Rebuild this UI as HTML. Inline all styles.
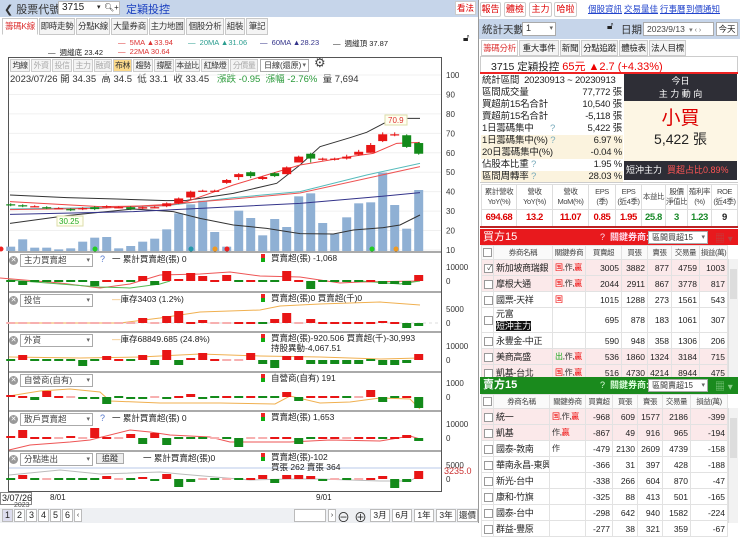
<!DOCTYPE html>
<html><head><meta charset="utf-8">
<style>
*{margin:0;padding:0;box-sizing:border-box}
body{width:740px;height:523px;overflow:hidden;background:#fff;font-family:"Liberation Sans","Noto Sans CJK TC",sans-serif;font-size:10px;color:#222;position:relative}
.a{position:absolute;white-space:nowrap}
.tab{position:absolute;top:18px;height:17px;border:1px solid #c8c8c8;background:#f4f4f4;font-size:8.5px;line-height:15px;text-align:center;color:#333;white-space:nowrap;overflow:hidden;letter-spacing:-0.3px}
.tb{position:absolute;top:59px;height:13px;border:1px solid #ccc;background:#f4f4f4;font-size:8px;line-height:11px;text-align:center;color:#333;white-space:nowrap;overflow:hidden;letter-spacing:-0.5px}
.tb.d{color:#aaa}
.sel{position:absolute;height:13px;border:1px solid #aaa;background:#fff;font-size:8.5px;line-height:11px;padding-left:3px;color:#333;white-space:nowrap;overflow:hidden}
.sel:after{content:"▾";position:absolute;right:2px;top:0;font-size:7px;color:#666}
.xi{position:absolute;width:9px;height:9px;border-radius:50%;background:#999;color:#fff;font-size:7px;line-height:9px;text-align:center}
.rb{position:absolute;top:2px;height:15px;border:1px solid #ccc;border-radius:2px;background:#fff;color:#d00;font-size:9px;line-height:13px;text-align:center;white-space:nowrap}
.rt{position:absolute;top:40px;height:16px;border:1px solid #ccc;background:#f4f4f4;font-size:8.5px;line-height:14px;text-align:center;white-space:nowrap;overflow:hidden;letter-spacing:-0.3px}
table{border-collapse:collapse;table-layout:fixed}
td,th{white-space:nowrap;overflow:hidden}
.st td{height:12px;font-size:9.5px;line-height:12px;padding:0 1px;letter-spacing:-0.2px}
.ft td{border:1px solid #ddd;text-align:center;font-size:7.5px;line-height:10px;color:#444;letter-spacing:-0.4px}
.bt td{border:1px solid #e2e2e2;font-size:8.5px;text-align:right;padding:0 2px;height:16px}
.bt td.n{text-align:left;font-size:9px;letter-spacing:-0.3px}
.bt td.k{text-align:left;font-size:8px;color:#333;letter-spacing:-0.3px}
.bt th{border:1px solid #e2e2e2;font-size:7.5px;font-weight:normal;color:#444;height:14px;background:#fafafa;letter-spacing:-0.4px}
.pk{background:#fbe9ea}
.cb{display:inline-block;width:9px;height:9px;border:1px solid #999;background:#fff;vertical-align:middle}
.r{color:#e00}
</style></head><body>
<div class="a" style="left:0;top:0;width:478px;height:17px;background:#c6d5ea"></div>
<div class="a" style="left:4px;top:1px;font-size:11px;color:#333">❮ 股票代號</div>
<div class="a" style="left:58px;top:1px;width:62px;height:14px;background:#fff;border:1px solid #bbb;font-size:10px;line-height:12px;padding-left:3px">3715<span style="position:absolute;left:38px;font-size:7px">▾</span><span style="position:absolute;left:45px;top:0;font-size:8px">🔍︎+</span></div>
<div class="a" style="left:126px;top:1px;font-size:11px;color:#1a3fc0">定穎投控</div>
<div class="a" style="left:455px;top:1px;width:21px;height:14px;background:#fff;border:1px solid #ccc;color:#d00;font-size:8.5px;line-height:12px;text-align:center">看法</div>
<div class="tab" style="left:2px;width:36px;background:#fff;color:#d33;border-bottom-color:#fff">籌碼K線</div>
<div class="tab" style="left:39px;width:36px">即時走勢</div>
<div class="tab" style="left:76px;width:34px">分點K線</div>
<div class="tab" style="left:111px;width:37px">大量券商</div>
<div class="tab" style="left:149px;width:36px">主力地圖</div>
<div class="tab" style="left:186px;width:38px">個股分析</div>
<div class="tab" style="left:225px;width:20px">組裝</div>
<div class="tab" style="left:246px;width:22px">筆記</div>
<div class="a" style="left:118px;top:38px;font-size:7.5px;color:#d33">— &nbsp;5MA ▲33.94</div>
<div class="a" style="left:188px;top:38px;font-size:7.5px;color:#2a9d8f">— &nbsp;20MA ▲31.06</div>
<div class="a" style="left:260px;top:38px;font-size:7.5px;color:#33338a">— &nbsp;60MA ▲28.23</div>
<div class="a" style="left:333px;top:38px;font-size:7.5px;color:#222">— &nbsp;週縫頂 37.87</div>
<div class="a" style="left:48px;top:47px;font-size:7.5px;color:#222">— &nbsp;週縫底 23.42</div>
<div class="a" style="left:118px;top:47px;font-size:7.5px;color:#d33">— &nbsp;22MA 30.64</div>
<div class="a" style="left:463px;top:33px;font-size:10px">🔓︎</div>
<div class="a" style="left:8px;top:57px;width:434px;height:435px;border:1px solid #555"></div>
<div class="tb" style="left:10px;width:20px">均線</div>
<div class="tb d" style="left:31px;width:20px">外資</div>
<div class="tb d" style="left:52px;width:20px">投信</div>
<div class="tb d" style="left:73px;width:20px">主力</div>
<div class="tb d" style="left:94px;width:18px">融資</div>
<div class="tb" style="left:113px;width:19px;background:#fbd98a">布林</div>
<div class="tb" style="left:133px;width:20px">趨勢</div>
<div class="tb" style="left:154px;width:20px">撐壓</div>
<div class="tb" style="left:175px;width:25px">本益比</div>
<div class="tb" style="left:201px;width:28px">紅綠燈</div>
<div class="tb d" style="left:230px;width:28px">分價量</div>
<div class="sel" style="left:260px;top:59px;width:49px;font-size:8px">日線(還原)</div>
<div class="a" style="left:314px;top:55px;font-size:13px;color:#444">⚙</div>
<div class="a" style="left:10px;top:71px;font-size:9.5px;color:#333">2023/07/26 開 34.35 &nbsp;高 34.5 &nbsp;低 33.1 &nbsp;收 33.45 &nbsp;&nbsp;<span style="color:#2a9a3a">漲跌 -0.95 &nbsp;漲幅 -2.76%</span> &nbsp;量 7,694</div>
<svg id="ch" class="a" style="left:0;top:0" width="480" height="523"></svg>
<div id="subs"></div>
<div class="a" style="left:0;top:492px;width:32px;height:13px;border:1px solid #888;background:#fff;font-size:9px;line-height:11px;padding-left:1px">3/07/26</div>
<div class="a" style="left:14px;top:502px;font-size:7px;color:#555">2023</div>
<div class="a" style="left:50px;top:493px;font-size:8px">8/01</div>
<div class="a" style="left:316px;top:493px;font-size:8px">9/01</div>
<div class="a" style="left:0;top:508px;width:478px;height:15px;background:#eef0f3"></div>
<div id="pg"></div>
<div class="a" style="left:294px;top:509px;width:32px;height:13px;border:1px solid #bbb;background:#fff"></div>
<div class="a" style="left:328px;top:509px;width:8px;height:13px;border:1px solid #bbb;background:#fff;font-size:7px;text-align:center;line-height:11px">›</div>
<div class="a" style="left:337px;top:507px;font-size:13px;color:#333">⊖</div>
<div class="a" style="left:354px;top:507px;font-size:13px;color:#333">⊕</div>
<div class="a" style="left:370px;top:509px;width:20px;height:13px;border:1px solid #bbb;background:#fff;font-size:8.5px;line-height:11px;text-align:center">3月</div>
<div class="a" style="left:392px;top:509px;width:20px;height:13px;border:1px solid #bbb;background:#fff;font-size:8.5px;line-height:11px;text-align:center">6月</div>
<div class="a" style="left:414px;top:509px;width:20px;height:13px;border:1px solid #bbb;background:#fff;font-size:8.5px;line-height:11px;text-align:center">1年</div>
<div class="a" style="left:436px;top:509px;width:20px;height:13px;border:1px solid #bbb;background:#fff;font-size:8.5px;line-height:11px;text-align:center">3年</div>
<div class="a" style="left:457px;top:509px;width:21px;height:13px;border:1px solid #bbb;background:#fff;font-size:8.5px;line-height:11px;text-align:center">還價</div>

<div class="a" style="left:478px;top:0;width:1px;height:523px;background:#999"></div>
<div class="rb" style="left:480px;width:21px">報告</div>
<div class="rb" style="left:504px;width:22px">體檢</div>
<div class="rb" style="left:529px;width:23px">主力</div>
<div class="rb" style="left:554px;width:23px">哈啦</div>
<div class="a" style="left:588px;top:3px;font-size:8.5px;color:#2244cc;text-decoration:underline">個股資訊</div>
<div class="a" style="left:624px;top:3px;font-size:8.5px;color:#2244cc;text-decoration:underline">交易量佳</div>
<div class="a" style="left:660px;top:3px;font-size:8.5px;color:#2244cc;text-decoration:underline">行事曆</div>
<div class="a" style="left:686px;top:3px;font-size:8.5px;color:#2244cc;text-decoration:underline">到價通知</div>
<div class="a" style="left:479px;top:19px;width:261px;height:20px;background:#c6d5ea"></div>
<div class="a" style="left:482px;top:22px;font-size:10.5px;color:#333">統計天數</div>
<div class="sel" style="left:522px;top:22px;width:34px;height:14px;font-size:9px">1</div>
<div class="a" style="left:607px;top:21px;font-size:10px">🔓︎</div>
<div class="a" style="left:621px;top:22px;font-size:10.5px;color:#333">日期</div>
<div class="a" style="left:643px;top:22px;width:71px;height:14px;border:1px solid #aaa;background:#fff;font-size:8.5px;line-height:12px;padding-left:3px;color:#444">2023/9/13 <span style="font-size:7px;color:#777">&nbsp;▾ ‹ ›</span></div>
<div class="a" style="left:716px;top:22px;width:22px;height:14px;border:1px solid #aaa;background:#fff;font-size:8.5px;line-height:12px;text-align:center">今天</div>
<div class="rt" style="left:481px;width:37px;background:#fff;color:#d33">籌碼分析</div>
<div class="rt" style="left:519px;width:40px">重大事件</div>
<div class="rt" style="left:560px;width:20px">新聞</div>
<div class="rt" style="left:581px;width:37px">分點追蹤</div>
<div class="rt" style="left:619px;width:29px">體檢表</div>
<div class="rt" style="left:649px;width:37px">法人目標</div>
<div class="a" style="left:480px;top:56px;width:258px;height:17px;border:1px solid #ccc;border-bottom:none"></div>
<div class="a" style="left:491px;top:58px;font-size:10.5px;color:#222">3715 定穎投控 <span class="r" style="font-size:11px">65元 ▲2.7 (+4.33%)</span></div>
<div class="a" style="left:480px;top:72px;width:258px;height:2px;background:#e22"></div>
<table class="st a" style="left:481px;top:75px;width:142px">
<col style="width:90px"><col>
<tr><td colspan=2>統計區間 &nbsp;20230913 ~ 20230913</td></tr>
<tr><td>區間成交量</td><td align=right>77,772 張</td></tr>
<tr><td>買超前15名合計</td><td align=right>10,540 張</td></tr>
<tr><td>賣超前15名合計</td><td align=right>-5,118 張</td></tr>
<tr><td>1日籌碼集中 <span style="color:#7ab;margin-left:14px">?</span></td><td align=right>5,422 張</td></tr>
<tr style="background:#fbf3de"><td>1日籌碼集中(%) <span style="color:#7ab">?</span></td><td align=right>6.97 %</td></tr>
<tr style="background:#fbf3de"><td>20日籌碼集中(%)</td><td align=right>-0.04 %</td></tr>
<tr><td>佔股本比重 <span style="color:#7ab">?</span></td><td align=right>1.95 %</td></tr>
<tr style="background:#fbf3de"><td>區間周轉率 <span style="color:#7ab">?</span></td><td align=right>28.03 %</td></tr>
</table>
<div class="a" style="left:624px;top:74px;width:113px;height:27px;background:#2e2e36;color:#fff;font-size:9px;text-align:center;line-height:13px;padding-top:1px">今日<br>主 力 動 向</div>
<div class="a" style="left:624px;top:101px;width:113px;height:60px;background:#fdf6e4;text-align:center"><div style="color:#d00;font-size:19px;line-height:22px;margin-top:7px">小買</div><div style="font-size:14px;line-height:18px">5,422 張</div></div>
<div class="a" style="left:624px;top:161px;width:113px;height:19px;background:#2e2e36;color:#fff;font-size:9px;line-height:19px;padding-left:2px">短沖主力 &nbsp;<span style="color:#f55">買超占比0.89%</span></div>
<div class="a" style="left:480px;top:182px;width:258px;height:1px;background:#ccc"></div>
<table class="ft a" style="left:481px;top:184px;width:257px">
<col style="width:35px"><col style="width:36px"><col style="width:36px"><col style="width:27px"><col style="width:26px"><col style="width:24px"><col style="width:22px"><col style="width:24px"><col>
<tr style="height:25px"><td>累計營收<br>YoY(%)</td><td>營收<br>YoY(%)</td><td>營收<br>MoM(%)</td><td>EPS<br>(季)</td><td>EPS<br>(近4季)</td><td>本益比</td><td>股價<br>淨值比</td><td>殖利率<br>(%)</td><td>ROE<br>(近4季)</td></tr>
<tr style="height:17px;font-weight:bold"><td style="color:#d00;font-size:9.5px">694.68</td><td style="color:#d00;font-size:9.5px">13.2</td><td style="color:#d00;font-size:9.5px">11.07</td><td style="color:#d00;font-size:9.5px">0.85</td><td style="color:#d00;font-size:9.5px">1.95</td><td style="color:#1a8a2a;font-size:9.5px">25.8</td><td style="color:#1a8a2a;font-size:9.5px">3</td><td style="color:#1a8a2a;font-size:9.5px">1.23</td><td style="color:#222;font-size:9.5px">9</td></tr>
</table>
<div class="a" style="left:480px;top:226px;width:258px;height:2px;background:#b22"></div>
<div class="a" style="left:480px;top:229px;width:258px;height:16px;background:#e8191d;color:#fff;font-size:11px;line-height:16px;padding-left:3px">買方15<span style="position:absolute;left:120px;font-size:9px;color:#fde">? &nbsp;<b>關鍵券商:</b></span></div>
<div class="sel" style="left:648px;top:231px;width:60px;font-size:8px">區間買超15</div>
<div class="a" style="left:715px;top:230px;font-size:10px;color:#b44">▦ ▾</div>
<table class="bt a" style="left:481px;top:245px;width:247px">
<col style="width:12px"><col style="width:59px"><col style="width:33px"><col style="width:36px"><col style="width:26px"><col style="width:24px"><col style="width:28px"><col>
<tr><th><span class="cb"></span></th><th>券商名稱</th><th>關鍵券商</th><th>買賣超</th><th>買張</th><th>賣張</th><th>交易量</th><th>損益(萬)</th></tr>
<tr class="pk"><td><span class="cb" style="font-size:7px;line-height:7px">✓</span></td><td class="n">新加坡商瑞銀</td><td class="k"><span class="r">国</span>,作,<span class="r">贏</span></td><td>3005</td><td>3882</td><td>877</td><td>4759</td><td>1003</td></tr>
<tr class="pk"><td><span class="cb"></span></td><td class="n">摩根大通</td><td class="k"><span class="r">国</span>,作,<span class="r">贏</span></td><td>2044</td><td>2911</td><td>867</td><td>3778</td><td>817</td></tr>
<tr><td><span class="cb"></span></td><td class="n">國票-天祥</td><td class="k"><span class="r">国</span></td><td>1015</td><td>1288</td><td>273</td><td>1561</td><td>543</td></tr>
<tr style="height:25px"><td><span class="cb"></span></td><td class="n" style="line-height:12px">元富<br><span style="background:#111;color:#fff">短沖主力</span></td><td></td><td>695</td><td>878</td><td>183</td><td>1061</td><td>307</td></tr>
<tr><td><span class="cb"></span></td><td class="n">永豐金-中正</td><td></td><td>590</td><td>948</td><td>358</td><td>1306</td><td>206</td></tr>
<tr class="pk"><td><span class="cb"></span></td><td class="n">美商高盛</td><td class="k"><span style="color:#2a2">出</span>,作,<span class="r">贏</span></td><td>536</td><td>1860</td><td>1324</td><td>3184</td><td>715</td></tr>
<tr class="pk"><td><span class="cb"></span></td><td class="n">凱基-台北</td><td class="k"><span class="r">国</span>,作,<span class="r">贏</span></td><td>516</td><td>4730</td><td>4214</td><td>8944</td><td>475</td></tr>
</table>
<div class="a" style="left:728px;top:259px;width:10px;height:118px;background:#f2f2f2;border-left:1px solid #ddd"><div style="margin:10px 1px;height:30px;background:#ddd"></div></div>
<div class="a" style="left:480px;top:377px;width:258px;height:17px;background:#1a8a1d;color:#fff;font-size:11px;line-height:17px;padding-left:3px"><b>賣方15</b><span style="position:absolute;left:120px;font-size:9px;color:#dfd">? &nbsp;<b>關鍵券商:</b></span></div>
<div class="sel" style="left:648px;top:379px;width:60px;font-size:8px">區間賣超15</div>
<div class="a" style="left:715px;top:378px;font-size:10px;color:#8c8">▦ ▾</div>
<table class="bt a" style="left:481px;top:394px;width:247px">
<col style="width:12px"><col style="width:56px"><col style="width:36px"><col style="width:27px"><col style="width:25px"><col style="width:25px"><col style="width:28px"><col>
<tr><th><span class="cb"></span></th><th>券商名稱</th><th>關鍵券商</th><th>買賣超</th><th>買張</th><th>賣張</th><th>交易量</th><th>損益(萬)</th></tr>
<tr class="pk"><td><span class="cb"></span></td><td class="n">統一</td><td class="k"><span class="r">国</span>,作,<span class="r">贏</span></td><td>-968</td><td>609</td><td>1577</td><td>2186</td><td>-399</td></tr>
<tr class="pk"><td><span class="cb"></span></td><td class="n">凱基</td><td class="k">作,<span class="r">贏</span></td><td>-867</td><td>49</td><td>916</td><td>965</td><td>-194</td></tr>
<tr><td><span class="cb"></span></td><td class="n">國泰-敦南</td><td class="k">作</td><td>-479</td><td>2130</td><td>2609</td><td>4739</td><td>-158</td></tr>
<tr><td><span class="cb"></span></td><td class="n">華南永昌-東興</td><td></td><td>-366</td><td>31</td><td>397</td><td>428</td><td>-188</td></tr>
<tr><td><span class="cb"></span></td><td class="n">新光-台中</td><td></td><td>-338</td><td>266</td><td>604</td><td>870</td><td>-47</td></tr>
<tr><td><span class="cb"></span></td><td class="n">康和-竹旗</td><td></td><td>-325</td><td>88</td><td>413</td><td>501</td><td>-165</td></tr>
<tr><td><span class="cb"></span></td><td class="n">國泰-台中</td><td></td><td>-298</td><td>642</td><td>940</td><td>1582</td><td>-224</td></tr>
<tr><td><span class="cb"></span></td><td class="n">群益-豐原</td><td></td><td>-277</td><td>38</td><td>321</td><td>359</td><td>-67</td></tr>
</table>
<div class="a" style="left:728px;top:408px;width:10px;height:115px;background:#f2f2f2;border-left:1px solid #ddd"><div style="margin:10px 1px;height:40px;background:#ddd"></div></div>

<script>
var s='',X=function(i){return 10.7+12*i},P=function(p){return 75+(100-p)*1.944};
for(var v=10;v<=100;v+=10){s+='<line x1="9" x2="441" y1="'+P(v)+'" y2="'+P(v)+'" stroke="#f0f0f0"/>';s+='<text x="446" y="'+(P(v)+3)+'" font-size="8" fill="#333">'+v+'</text>';}
var vt=[575,553,578,578,583,580,560,548,546,580,573,560,551,523,475,448,437,531,575,467,489,541,492,516,424,415,504,536,487,445,442,353,450,521,405];
vt.forEach(function(t,i){var y=55+t/3;s+='<rect x="'+(X(i)-4.5)+'" y="'+y+'" width="9" height="'+(251-y)+'" fill="#8fb0d4"/>';});
function pl(pts,c,w){s+='<polyline fill="none" stroke="'+c+'" stroke-width="'+(w||1)+'" points="'+pts.map(function(p){return (p[0]/3)+','+(55+p[1]/3)}).join(' ')+'"/>';}
pl([[30,420],[200,428],[350,432],[500,437],[560,436],[700,415],[830,385],[900,330],[960,275],[1050,248],[1100,232],[1180,190],[1260,190]],'#333');
pl([[30,505],[200,482],[400,462],[520,470],[600,490],[700,510],[800,520],[900,536],[1000,537],[1060,525],[1150,518],[1200,510],[1260,480]],'#333');
pl([[30,462],[300,458],[500,452],[700,428],[900,410],[1100,360],[1260,325]],'#5bb',1);
pl([[30,464],[300,460],[500,448],[700,432],[900,414],[1100,370],[1260,335]],'#e55',1);
pl([[30,478],[400,470],[600,460],[900,445],[1100,428],[1260,413]],'#33338a',1);
pl([[30,440],[300,455],[500,452],[560,440],[700,390],[900,330],[1050,305],[1120,295],[1190,265],[1260,262]],'#e44',1);
var cd=[[33.5,33,34,32.5],[33,32.5,33.5,32],[32.5,32.5,33,32],[32,31.5,32.5,31],[31.5,31.5,32,31],[31,30.5,31.5,30],[31,31.5,32,30.5],[32,31,32.5,30.5],[32,32.5,33,31.5],[32,32,32.5,31.5],[32,31,32.5,30.5],[31.3,32,32.3,31],[32,32,32.5,31.5],[32.5,34,34.5,32],[34,36.5,37,33.5],[37,40,40.5,36],[40.5,40.5,41,40],[40.5,40.5,41,40],[44.5,46,46.5,44],[47.5,49,49.5,46],[50,48,50.5,47],[46.5,47.5,48,46],[49.5,48,50,47.5],[49,52.5,53,49],[55,58,58.5,55],[59.5,57,60,55],[57,57,57.5,56],[56.5,57,57.5,56],[57,58,59,56.5],[59,60.5,61.5,58.5],[60,64,65,60],[66,69.5,70.5,65.5],[69.5,69.5,70.5,68.5],[69,63,69.5,62.5],[65,59.5,65.5,59]];
cd.forEach(function(c,i){var up=c[1]>=c[0],col=up?'#e81515':'#138a1a',x=X(i);s+='<line x1="'+x+'" x2="'+x+'" y1="'+P(c[2])+'" y2="'+P(c[3])+'" stroke="'+col+'"/>';var t=P(Math.max(c[0],c[1])),b=P(Math.min(c[0],c[1]));s+='<rect x="'+(x-4.5)+'" y="'+t+'" width="9" height="'+Math.max(b-t,1.2)+'" fill="'+col+'"/>';});
s+='<rect x="57" y="216" width="26" height="10" fill="#fffff0" stroke="#dda"/><text x="59" y="224" font-size="8" fill="#2a2">30.25</text>';
s+='<rect x="385" y="115" width="22" height="10" fill="#fffff0" stroke="#dda"/><text x="388" y="123" font-size="8" fill="#d33">70.9</text>';
[[1,'#e22'],[95,'#2c2'],[191,'#29a'],[215,'#e92'],[227,'#e22'],[372,'#2c2'],[396,'#e92']].forEach(function(m){s+='<circle cx="'+m[0]+'" cy="249" r="2.5" fill="'+m[1]+'"/>';});
var pan=[[252,281,'10000'],[292,323,'5000'],[332,360,'10000'],[372,397,'1000'],[411,438,'10000'],[451,479,'5000']];
var dat=[[-1,-4,-1,-1,-1,-1,-1,-5,1,1,-1,5,-4,10,2,8,5,1,6,-1,1,-1,-1,10,1,-8,-1,-1,-1,-1,1,-3,-3,-4,6],
[0,0,0,0,0,0,0,0,0,0,0,5,0,7,12,1,3,0,0,1,1,-1,4,10,0,4,1,1,1,1,1,2,1,-5,-3],
[-1,5,-1,-1,-1,-1,-6,-1,4,1,-1,5,-5,10,-5,2,7,1,0,0,7,-4,-8,4,4,-4,-4,-4,-4,-4,-1,-5,-5,-3,6],
[2,1,-3,6,1,0,-2,-2,-7,-1,-2,-2,0,-2,1,3,-2,-1,1,-1,1,-1,-1,5,-4,1,1,1,-1,0,7,-5,-1,1,-11],
[2,8,1,1,0,2,0,10,1,0,4,-6,5,-7,-1,-1,-1,0,-1,-9,0,0,1,1,-6,-1,1,1,0,1,1,-1,1,3,-3],
[-1,4,-1,0,-1,-1,-1,-1,3,0,-1,2,-2,5,-8,-3,0,-1,0,-1,1,4,-4,4,4,3,-2,0,-1,0,1,3,-9,-3,8]];
var lines=[[[0,278],[60,283],[100,288],[130,284],[160,275],[200,274],[230,272],[260,276],[300,277],[340,283],[360,282],[420,281]],
[[9,323],[120,323],[160,318],[200,312],[260,310],[280,306],[320,304],[380,302],[420,305]],
[[9,357],[80,358],[140,357],[200,354],[260,356],[320,357],[380,359],[420,358]],
[[9,396],[40,391],[70,389],[100,392],[110,401],[160,403],[220,403],[275,404],[290,396],[320,403],[350,402],[380,398],[410,399],[420,409]],
[[9,450],[30,445],[70,442],[90,440],[130,430],[150,432],[170,435],[210,437],[230,442],[290,442],[330,440],[380,441],[410,436],[420,439]],
[[9,475],[60,470],[100,474],[160,472],[180,474],[250,480],[290,479],[320,479],[380,481],[410,481],[420,475]]];
var lc=['#e55','#f0b050','#f0b050','#f0b050','#e55','#bbb'];
pan.forEach(function(p,k){
 s+='<line x1="9" x2="441" y1="'+p[0]+'" y2="'+p[0]+'" stroke="#555"/>';
 s+='<text x="446" y="'+(p[1]-11)+'" font-size="8" fill="#333">'+p[2]+'</text><text x="446" y="'+(p[1]+3)+'" font-size="8" fill="#333">0</text>';
 if(k==1) s+='<line x1="9" x2="441" y1="323" y2="323" stroke="#ddd" stroke-dasharray="3,3"/>';
 s+='<polyline fill="none" stroke="'+lc[k]+'" points="'+lines[k].map(function(q){return q.join(',')}).join(' ')+'"/>';
 if(k==0) s+='<polyline fill="none" stroke="#5b5" points="9,280 60,284 100,287 130,288 160,284 170,281"/><polyline fill="none" stroke="#5b5" points="360,281 400,284 420,281"/>';
 dat[k].forEach(function(v,i){var x=X(i),col=v>=0?'#e81515':'#138a1a';if(v==0){col='#f7b0b0'}
  if(Math.abs(v)<=1)s+='<rect x="'+(x-4.5)+'" y="'+(p[1]-1)+'" width="9" height="2" fill="'+col+'"/>';
  else s+='<rect x="'+(x-4.5)+'" y="'+(v>0?p[1]-v:p[1])+'" width="9" height="'+Math.abs(v)+'" fill="'+col+'"/>';});
});
s+='<line x1="9" x2="441" y1="468" y2="468" stroke="#b8c8e8"/><text x="444" y="474" font-size="9" fill="#c33">3235.0</text>';
document.getElementById('ch').innerHTML=s;
var names=['主力買賣超','投信','外資','自營商(自有)','散戶買賣超','分點進出'];
var t1=['一 累計買賣超(張) 0','<span style="color:#f0b050">—</span>庫存3403 (1.2%)','<span style="color:#f0b050">—</span>庫存68849.685 (24.8%)','','一 累計買賣超(張) 0',''];
var t2=['買賣超(張) -1,068','買賣超(張)0 買賣超(千)0','買賣超(張)-920.506 買賣超(千)-30,993<br>持股異動-4,067.51','自營商(自有) 191','買賣超(張) 1,653','買賣超(張)-102<br>買張 262 賣張 364'];
var h='';
pan.forEach(function(p,k){var y=p[0]+2;
 h+='<div class="xi" style="left:9px;top:'+(y+2)+'px">✕</div><div class="sel" style="left:20px;top:'+y+'px;width:73px;color:#444">'+names[k]+'</div>';
 if(k==0||k==4)h+='<div class="a" style="left:100px;top:'+(y)+'px;font-size:9px;color:#57c">?</div>';
 if(k==5){h+='<div class="a" style="left:96px;top:'+y+'px;width:28px;height:11px;border:1px solid #aaa;background:#eee;font-size:8px;line-height:9px;text-align:center">追蹤</div><div class="a" style="left:143px;top:'+(y-1)+'px;font-size:8.5px">一 累計買賣超(張)0</div>';}
 else h+='<div class="a" style="left:112px;top:'+(y-1)+'px;font-size:8.5px">'+t1[k]+'</div>';
 h+='<div class="a" style="left:261px;top:'+(y)+'px;width:4px;height:8px;background:linear-gradient(#e22 50%,#1a1 50%)"></div><div class="a" style="left:271px;top:'+(y-1)+'px;font-size:8.5px;line-height:10px">'+t2[k]+'</div>';});
document.getElementById('subs').innerHTML=h;
var g='';for(var i=1;i<=6;i++)g+='<div class="a" style="left:'+(2+(i-1)*12)+'px;top:509px;width:11px;height:13px;border:1px solid #bbb;background:'+(i==1?'#dde':'#fff')+';font-size:9px;line-height:11px;text-align:center">'+i+'</div>';
g+='<div class="a" style="left:74px;top:509px;width:8px;height:13px;border:1px solid #bbb;background:#fff;font-size:7px;line-height:11px;text-align:center">‹</div>';
document.getElementById('pg').innerHTML=g;
</script>
</body></html>
